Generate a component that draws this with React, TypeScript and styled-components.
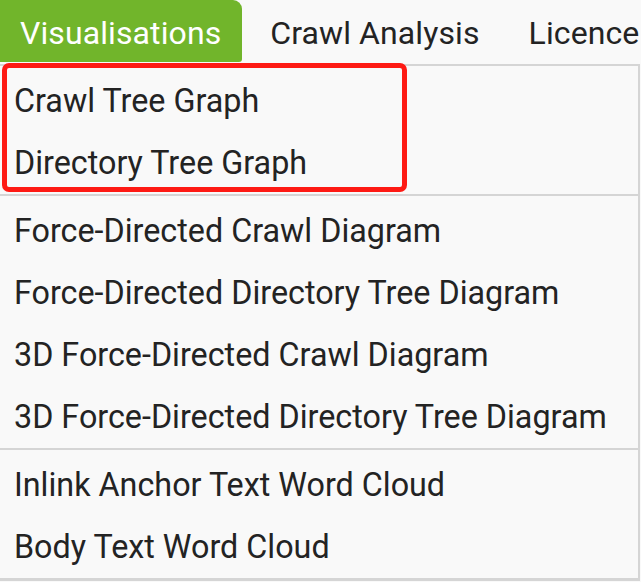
import styled, { createGlobalStyle } from 'styled-components';

const GlobalStyle = createGlobalStyle`
  html, body {
    margin: 0;
    padding: 0;
    background: #f9f9f9;
    overflow: hidden;
  }
  body {
    font-family: Roboto, "Liberation Sans", Arial, sans-serif;
    color: #232323;
  }
`;

const tabs = ['Visualisations', 'Crawl Analysis', 'Licence'];

const groups = [
  ['Crawl Tree Graph', 'Directory Tree Graph'],
  [
    'Force-Directed Crawl Diagram',
    'Force-Directed Directory Tree Diagram',
    '3D Force-Directed Crawl Diagram',
    '3D Force-Directed Directory Tree Diagram',
  ],
  ['Inlink Anchor Text Word Cloud', 'Body Text Word Cloud'],
];

function App() {
  return (
    <>
      <GlobalStyle />
      <Page>
        <TabBar>
          {tabs.map((t, i) => (
            <Tab key={t} $active={i === 0}>
              {t}
            </Tab>
          ))}
        </TabBar>
        <Menu>
          {groups.map((g, i) => (
            <Group key={i}>
              {g.map((item) => (
                <Item key={item}>{item}</Item>
              ))}
            </Group>
          ))}
          {/* red box drawn round the first two entries */}
          <Highlight />
        </Menu>
      </Page>
    </>
  );
}

export default App;

const Page = styled.div`
  width: 641px;
  height: 582px;
  display: flex;
  flex-direction: column;
`;

const TabBar = styled.div`
  display: flex;
  align-items: flex-start;
  gap: 8px;
  height: 64px;
  white-space: nowrap;
`;

const Tab = styled.div<{ $active?: boolean }>`
  height: 62px;
  line-height: 66px;
  padding: 0 21px 0 20px;
  font-size: 32px;
  letter-spacing: 0.1px;
  color: ${(p) => (p.$active ? '#ffffff' : '#232323')};
  background: ${(p) => (p.$active ? '#71b52b' : 'transparent')};
  border-radius: 0 9px 3px 0;
`;

const Menu = styled.div`
  position: relative;
  border-top: 2px solid #d5d5d5;
  border-right: 2px solid #d5d5d5;
  border-bottom: 3px solid #d5d5d5;
  margin-right: 1px;
`;

const Group = styled.div`
  padding: 1px 0 3px;

  & + & {
    border-top: 2px solid #d5d5d5;
  }

  &:last-child {
    padding: 3px 0 1px;
  }
`;

const Item = styled.div`
  box-sizing: border-box;
  height: 62px;
  padding: 6px 0 0 14px;
  line-height: 56px;
  font-size: 32.3px;
  white-space: nowrap;
`;

const Highlight = styled.div`
  position: absolute;
  left: 2px;
  top: -3px;
  width: 395px;
  height: 119px;
  border: 5px solid #fe1a14;
  border-radius: 7px;
  pointer-events: none;
`;
